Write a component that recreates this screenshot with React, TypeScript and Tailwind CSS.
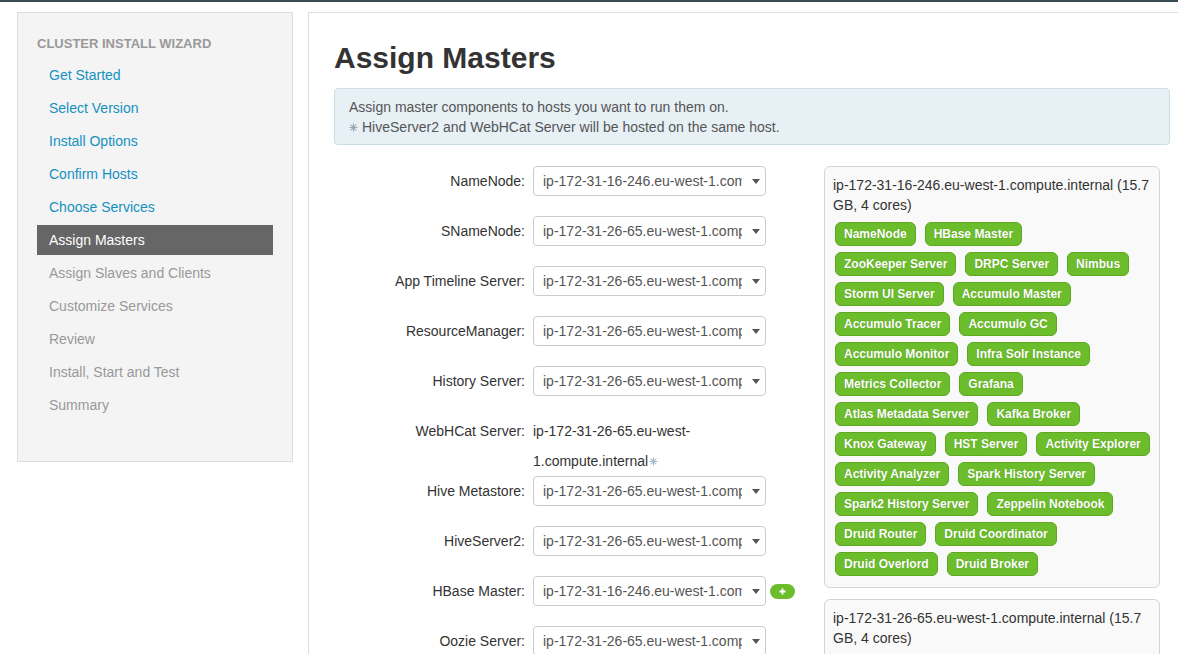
import React from "react";

const navItems: { label: string; state: "link" | "active" | "disabled" }[] = [
  { label: "Get Started", state: "link" },
  { label: "Select Version", state: "link" },
  { label: "Install Options", state: "link" },
  { label: "Confirm Hosts", state: "link" },
  { label: "Choose Services", state: "link" },
  { label: "Assign Masters", state: "active" },
  { label: "Assign Slaves and Clients", state: "disabled" },
  { label: "Customize Services", state: "disabled" },
  { label: "Review", state: "disabled" },
  { label: "Install, Start and Test", state: "disabled" },
  { label: "Summary", state: "disabled" },
];

const H16 = "ip-172-31-16-246.eu-west-1.compute.internal";
const H26 = "ip-172-31-26-65.eu-west-1.compute.internal";

type Row =
  | { label: string; host: string; plus?: boolean }
  | { label: string; text: string };

const rows: Row[] = [
  { label: "NameNode:", host: H16 },
  { label: "SNameNode:", host: H26 },
  { label: "App Timeline Server:", host: H26 },
  { label: "ResourceManager:", host: H26 },
  { label: "History Server:", host: H26 },
  { label: "WebHCat Server:", text: H26 },
  { label: "Hive Metastore:", host: H26 },
  { label: "HiveServer2:", host: H26 },
  { label: "HBase Master:", host: H16, plus: true },
  { label: "Oozie Server:", host: H26 },
];

const badgeRows: string[][] = [
  ["NameNode", "HBase Master"],
  ["ZooKeeper Server", "DRPC Server", "Nimbus"],
  ["Storm UI Server", "Accumulo Master"],
  ["Accumulo Tracer", "Accumulo GC"],
  ["Accumulo Monitor", "Infra Solr Instance"],
  ["Metrics Collector", "Grafana"],
  ["Atlas Metadata Server", "Kafka Broker"],
  ["Knox Gateway", "HST Server", "Activity Explorer"],
  ["Activity Analyzer", "Spark History Server"],
  ["Spark2 History Server", "Zeppelin Notebook"],
  ["Druid Router", "Druid Coordinator"],
  ["Druid Overlord", "Druid Broker"],
];

function Flake({ className }: { className?: string }) {
  return (
    <svg viewBox="0 0 10 10" className={className} aria-hidden="true">
      <g stroke="currentColor" strokeWidth="1.2" strokeLinecap="round">
        <line x1="5" y1="1" x2="5" y2="9" />
        <line x1="1" y1="5" x2="9" y2="5" />
        <line x1="2.2" y1="2.2" x2="7.8" y2="7.8" />
        <line x1="7.8" y1="2.2" x2="2.2" y2="7.8" />
      </g>
    </svg>
  );
}

function FakeSelect({ host }: { host: string }) {
  return (
    <div className="flex h-[30px] w-[233px] shrink-0 items-center rounded-[4px] border border-[#ccc] bg-white pl-[9px]">
      <div className="w-[199px] overflow-hidden whitespace-nowrap text-[14px] text-[#555]">
        {host}
      </div>
      <svg viewBox="0 0 8 5" className="ml-[10px] h-[5px] w-[8px] text-[#555]">
        <polygon points="0,0 8,0 4,5" fill="currentColor" />
      </svg>
    </div>
  );
}

function HostCard({ title, rows, className }: { title: string; rows: string[][]; className?: string }) {
  return (
    <div
      className={
        "rounded-[6px] border border-[#d4d4d4] bg-[#f9f9f9] px-2 pt-2 text-[14px] leading-[20px] text-[#333] " +
        (className ?? "")
      }
    >
      <div>{title}</div>
      {rows.length > 0 && (
        <div className="ml-[2px] mt-[7px] flex flex-col gap-y-[6px] pb-[11px]">
          {rows.map((row, i) => (
            <div key={i} className="flex gap-x-[9px]">
              {row.map((b) => (
                <span
                  key={b}
                  className="h-[24px] whitespace-nowrap rounded-[6px] border border-[#5ea823] bg-[#6cbd2b] px-2 text-[12px] font-bold leading-[22px] text-white [text-shadow:0_0_1px_rgba(0,0,0,0.25)]"
                >
                  {b}
                </span>
              ))}
            </div>
          ))}
        </div>
      )}
    </div>
  );
}

export default function App() {
  return (
    <div className="min-h-screen overflow-hidden bg-white font-['Liberation_Sans',Arial,sans-serif]">
      <div className="h-[2px] bg-[#3b4c56]" />
      <div className="flex gap-[15px] pl-[17px] pt-[10px]">
        {/* Sidebar */}
        <aside className="h-[450px] w-[276px] shrink-0 border border-[#ddd] bg-[#f4f4f4] px-[19px] pt-[21px]">
          <div className="mb-[6px] text-[13px] font-bold uppercase leading-[20px] text-[#999]">
            Cluster Install Wizard
          </div>
          <ul>
            {navItems.map((n) => (
              <li
                key={n.label}
                className={
                  "mb-[3px] h-[30px] px-3 text-[14px] leading-[30px] " +
                  (n.state === "active"
                    ? "bg-[#666] text-white"
                    : n.state === "link"
                    ? "text-[#1491c1]"
                    : "text-[#999]")
                }
              >
                {n.label}
              </li>
            ))}
          </ul>
        </aside>

        {/* Main */}
        <main className="min-w-0 flex-1 border-l border-t border-[#ddd] pl-[25px] pr-2 pt-[28px]">
          <h1 className="mb-[14px] text-[30px] font-bold leading-[33px] text-[#333]">Assign Masters</h1>
          <div className="rounded-[4px] border border-[#cddde6] bg-[#e6f0f5] px-[14px] pb-[7px] pt-2 text-[14px] leading-[20px] text-[#555]">
            <div>Assign master components to hosts you want to run them on.</div>
            <div className="flex items-center">
              <Flake className="mr-[4px] h-[9px] w-[9px] text-[#9aa8b0]" />
              HiveServer2 and WebHCat Server will be hosted on the same host.
            </div>
          </div>

          <div className="mt-[21px] flex">
            <div className="w-[490px] shrink-0">
              {rows.map((r) =>
                "text" in r ? (
                  <div key={r.label} className="flex text-[14px] leading-[30px] text-[#333]">
                    <div className="w-[191px] shrink-0 text-right">{r.label}</div>
                    <div className="ml-[8px] w-[233px]">
                      ip-172-31-26-65.eu-west-1.compute.internal
                      <Flake className="ml-[1px] inline-block h-[9px] w-[9px] align-[0px] text-[#a8bcc8]" />
                    </div>
                  </div>
                ) : (
                  <div key={r.label} className="mb-[20px] flex h-[30px] items-center text-[14px] text-[#333]">
                    <div className="w-[191px] shrink-0 text-right">{r.label}</div>
                    <div className="ml-[8px]">
                      <FakeSelect host={r.host} />
                    </div>
                    {r.plus && (
                      <div className="ml-[4px] flex h-[15px] w-[25px] items-center justify-center rounded-full bg-[#6cbd2b]">
                        <svg viewBox="0 0 7 7" className="h-[7px] w-[7px]">
                          <path d="M3.5 0.5v6M0.5 3.5h6" stroke="white" strokeWidth="1.8" />
                        </svg>
                      </div>
                    )}
                  </div>
                )
              )}
            </div>
            <div className="w-[336px] shrink-0">
              <HostCard title={H16 + " (15.7 GB, 4 cores)"} rows={badgeRows} />
              <HostCard title={H26 + " (15.7 GB, 4 cores)"} rows={[]} className="mt-[11px] h-[80px]" />
            </div>
          </div>
        </main>
      </div>
    </div>
  );
}
